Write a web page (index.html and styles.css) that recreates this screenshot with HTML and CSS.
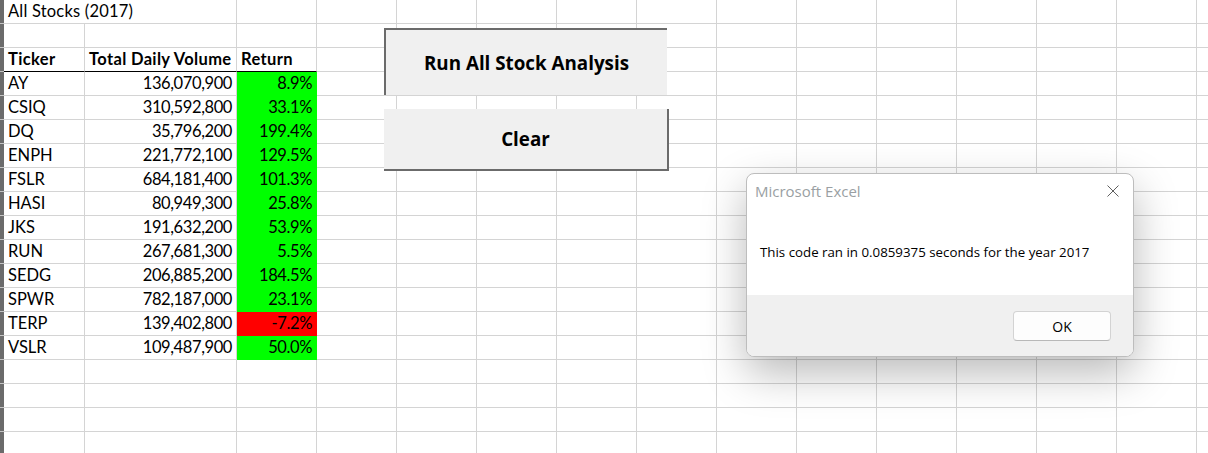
FILE: index.html
```html
<!DOCTYPE html>
<html lang="en">
<head>
<meta charset="utf-8">
<title>All Stocks (2017)</title>
<link rel="stylesheet" href="styles.css">
</head>
<body>
<div class="sheet">
  <div class="row"><span class="strip"></span><span class="title">All Stocks (2017)</span><span></span><span></span><span></span><span></span><span></span><span></span><span></span><span></span><span></span><span></span><span></span><span></span><span></span></div>
  <div class="row"><span class="strip"></span><span></span><span></span><span></span><span></span><span></span><span></span><span></span><span></span><span></span><span></span><span></span><span></span><span></span><span></span><span></span></div>
  <div class="row"><span class="strip"></span><span class="hd">Ticker</span><span class="hd">Total Daily Volume</span><span class="hd">Return</span><span></span><span></span><span></span><span></span><span></span><span></span><span></span><span></span><span></span><span></span><span></span><span></span></div>
  <div class="row"><span class="strip"></span><span>AY</span><span class="num">136,070,900</span><span class="num up">8.9%</span><span></span><span></span><span></span><span></span><span></span><span></span><span></span><span></span><span></span><span></span><span></span><span></span></div>
  <div class="row"><span class="strip"></span><span>CSIQ</span><span class="num">310,592,800</span><span class="num up">33.1%</span><span></span><span></span><span></span><span></span><span></span><span></span><span></span><span></span><span></span><span></span><span></span><span></span></div>
  <div class="row"><span class="strip"></span><span>DQ</span><span class="num">35,796,200</span><span class="num up">199.4%</span><span></span><span></span><span></span><span></span><span></span><span></span><span></span><span></span><span></span><span></span><span></span><span></span></div>
  <div class="row"><span class="strip"></span><span>ENPH</span><span class="num">221,772,100</span><span class="num up">129.5%</span><span></span><span></span><span></span><span></span><span></span><span></span><span></span><span></span><span></span><span></span><span></span><span></span></div>
  <div class="row"><span class="strip"></span><span>FSLR</span><span class="num">684,181,400</span><span class="num up">101.3%</span><span></span><span></span><span></span><span></span><span></span><span></span><span></span><span></span><span></span><span></span><span></span><span></span></div>
  <div class="row"><span class="strip"></span><span>HASI</span><span class="num">80,949,300</span><span class="num up">25.8%</span><span></span><span></span><span></span><span></span><span></span><span></span><span></span><span></span><span></span><span></span><span></span><span></span></div>
  <div class="row"><span class="strip"></span><span>JKS</span><span class="num">191,632,200</span><span class="num up">53.9%</span><span></span><span></span><span></span><span></span><span></span><span></span><span></span><span></span><span></span><span></span><span></span><span></span></div>
  <div class="row"><span class="strip"></span><span>RUN</span><span class="num">267,681,300</span><span class="num up">5.5%</span><span></span><span></span><span></span><span></span><span></span><span></span><span></span><span></span><span></span><span></span><span></span><span></span></div>
  <div class="row"><span class="strip"></span><span>SEDG</span><span class="num">206,885,200</span><span class="num up">184.5%</span><span></span><span></span><span></span><span></span><span></span><span></span><span></span><span></span><span></span><span></span><span></span><span></span></div>
  <div class="row"><span class="strip"></span><span>SPWR</span><span class="num">782,187,000</span><span class="num up">23.1%</span><span></span><span></span><span></span><span></span><span></span><span></span><span></span><span></span><span></span><span></span><span></span><span></span></div>
  <div class="row"><span class="strip"></span><span>TERP</span><span class="num">139,402,800</span><span class="num down">-7.2%</span><span></span><span></span><span></span><span></span><span></span><span></span><span></span><span></span><span></span><span></span><span></span><span></span></div>
  <div class="row"><span class="strip"></span><span>VSLR</span><span class="num">109,487,900</span><span class="num up">50.0%</span><span></span><span></span><span></span><span></span><span></span><span></span><span></span><span></span><span></span><span></span><span></span><span></span></div>
  <div class="row"><span class="strip"></span><span></span><span></span><span></span><span></span><span></span><span></span><span></span><span></span><span></span><span></span><span></span><span></span><span></span><span></span><span></span></div>
  <div class="row"><span class="strip"></span><span></span><span></span><span></span><span></span><span></span><span></span><span></span><span></span><span></span><span></span><span></span><span></span><span></span><span></span><span></span></div>
  <div class="row"><span class="strip"></span><span></span><span></span><span></span><span></span><span></span><span></span><span></span><span></span><span></span><span></span><span></span><span></span><span></span><span></span><span></span></div>
  <div class="row"><span class="strip"></span><span></span><span></span><span></span><span></span><span></span><span></span><span></span><span></span><span></span><span></span><span></span><span></span><span></span><span></span><span></span></div>
</div>

<div class="btn btn-run">Run All Stock Analysis</div>
<div class="btn btn-clear">Clear</div>

<div class="dialog">
  <div class="dlg-main">
    <div class="dlg-head">
      <span class="dlg-title">Microsoft Excel</span>
      <svg class="dlg-close" width="12" height="12" viewBox="0 0 12 12"><path d="M0.5 0.5L11.5 11.5M11.5 0.5L0.5 11.5" stroke="#5f5f5f" stroke-width="1" fill="none"/></svg>
    </div>
    <div class="dlg-msg">This code ran in 0.0859375 seconds for the year 2017</div>
  </div>
  <div class="dlg-foot">
    <div class="dlg-ok">OK</div>
  </div>
</div>
</body>
</html>
```
FILE: styles.css
```css
body {
  margin: 0;
  width: 1208px;
  height: 453px;
  overflow: hidden;
  position: relative;
  background: #ffffff;
  font-family: Lato, "Liberation Sans", sans-serif;
}

.sheet {
  display: flex;
  flex-direction: column;
}

.row {
  display: grid;
  grid-template-columns: 4px 81px 152px 80px repeat(11, 80px) 1fr;
  height: 24px;
}

.row > span {
  box-sizing: border-box;
  border-right: 1px solid #d4d4d4;
  border-bottom: 1px solid #d4d4d4;
  padding: 0 4px;
  line-height: 23px;
  font-size: 16.5px;
  color: #000;
  white-space: nowrap;
  overflow: hidden;
}

.row > span:last-child {
  border-right: 0;
}

.row > .strip {
  padding: 0;
  border-right: 0;
  background: #6b6b6b;
  border-bottom: 1px solid #c4c4c4;
}

.row > .title {
  grid-column: span 2;
  letter-spacing: 0.2px;
}

.row > .hd {
  font-weight: bold;
  letter-spacing: 0.35px;
  border-bottom-color: #000;
}

.row > .num {
  text-align: right;
  letter-spacing: -0.4px;
  padding-right: 4px;
}

.row > .up {
  background: #00ff00;
  border-color: #00ff00;
}

.row > .down {
  background: #ff0000;
  border-color: #ff0000;
}

/* floating form buttons */
.btn {
  position: absolute;
  box-sizing: border-box;
  background: #f0f0f0;
  display: flex;
  align-items: center;
  justify-content: center;
  font-family: "Open Sans", "Noto Sans", sans-serif;
  font-weight: bold;
  font-size: 18.8px;
  color: #000;
}

.btn-run {
  left: 384px;
  top: 28px;
  width: 283px;
  height: 67px;
  border-top: 2px solid #6b6b6b;
  border-left: 2px solid #6b6b6b;
}

.btn-clear {
  left: 384px;
  top: 109px;
  width: 285px;
  height: 62px;
  border-right: 2px solid #6b6b6b;
  border-bottom: 2px solid #6b6b6b;
}

/* message box */
.dialog {
  position: absolute;
  left: 746px;
  top: 173px;
  width: 388px;
  height: 184px;
  box-sizing: border-box;
  border: 1px solid #bdbdbd;
  border-radius: 8px;
  background: #ffffff;
  box-shadow: 0 16px 44px rgba(0, 0, 0, 0.28);
  overflow: hidden;
  display: flex;
  flex-direction: column;
  font-family: "Open Sans", "Noto Sans", sans-serif;
}

.dlg-main {
  flex: 1;
  display: flex;
  flex-direction: column;
}

.dlg-head {
  display: flex;
  align-items: center;
  justify-content: space-between;
  padding: 7px 14px 0 8px;
  height: 20px;
}

.dlg-title {
  font-size: 15px;
  line-height: 20px;
  color: #9a9fa3;
}

.dlg-close {
  display: block;
}

.dlg-msg {
  margin-top: 41px;
  padding-left: 13px;
  font-size: 13.3px;
  line-height: 20px;
  color: #000;
  white-space: nowrap;
}

.dlg-foot {
  height: 61px;
  box-sizing: border-box;
  background: #f0f0f0;
  display: flex;
  justify-content: flex-end;
  align-items: flex-start;
  padding: 16px 22px 0 0;
}

.dlg-ok {
  width: 98px;
  height: 30px;
  box-sizing: border-box;
  background: #fdfdfd;
  border: 1px solid #d3d3d3;
  border-bottom-color: #b8b8b8;
  border-radius: 4px;
  display: flex;
  align-items: center;
  justify-content: center;
  font-size: 14px;
  color: #000;
}
```
